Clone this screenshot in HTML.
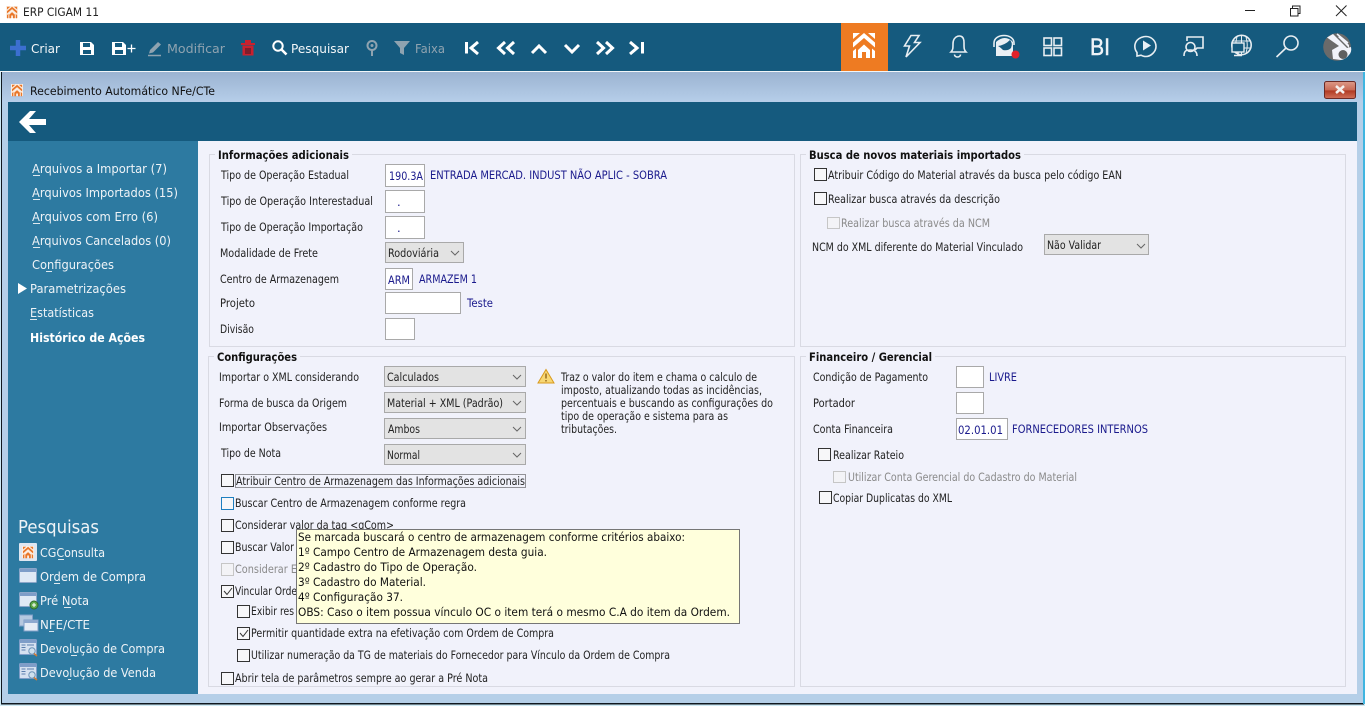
<!DOCTYPE html>
<html lang="pt"><head><meta charset="utf-8"><title>ERP CIGAM 11</title>
<style>
html,body{margin:0;padding:0;width:1365px;height:706px;overflow:hidden;background:#fff}
svg{display:block}
text{font-family:"DejaVu Sans","Liberation Sans",sans-serif;font-size:11.5px;fill:#222;white-space:pre}
.b{font-weight:bold;fill:#111}
.n{fill:#1a1a8c}
.g{fill:#8a8a8a}
.w{fill:#fff}
.s{fill:#eef3f7}
.t{font-size:12.5px;fill:#f4f7f9}
.d{font-size:12.5px;fill:#8fa3b0}
.bx{fill:#fff;stroke:#a9a9a9}
.sel{fill:#e3e3e3;stroke:#a9a9a9}
.cb{fill:#f7f7f9;stroke:#333}
.cd{fill:#f3f3f6;stroke:#c6c6c6}
.gb{fill:none;stroke:#d9dae3}
.ar{fill:none;stroke:#666;stroke-width:1}
.ic{fill:none;stroke:#e8eef2;stroke-width:1.6}
.nv{fill:none;stroke:#fff;stroke-width:3}
</style></head><body>
<svg width="1365" height="706" viewBox="0 0 1365 706" xmlns="http://www.w3.org/2000/svg">
<defs>
<linearGradient id="fr" x1="0" y1="0" x2="0" y2="1"><stop offset="0" stop-color="#9bb3d1"/><stop offset="1" stop-color="#b6cee9"/></linearGradient>
<linearGradient id="cl" x1="0" y1="0" x2="0" y2="1"><stop offset="0" stop-color="#dc9a88"/><stop offset=".5" stop-color="#c96a55"/><stop offset=".55" stop-color="#b03a22"/><stop offset="1" stop-color="#d0705a"/></linearGradient>
<path id="hs" d="M0 0h7l-7 6zM22 0h-7l7 6zM0 9.500l11-9.500 11 9.500v5l-11-9.500-11 9.500zM5 25v-8l6-5.500 6 5.500v8h-4v-6h-4v6zM0 18l3-2.500v9.500h-3zM22 18l-3-2.500v9.500h3z"/>
<g id="logo"><rect width="12" height="12" fill="#fbeee2"/><use href="#hs" transform="translate(1 .8) scale(.46)" fill="#e9772a"/></g>
<g id="win"><rect x=".5" y=".5" width="17" height="14" rx="1" fill="#dfe9f5" stroke="#8ba6c9"/><rect x="1" y="1" width="16" height="3" fill="#7e9dc8"/></g>
<g id="look"><rect x=".5" y=".5" width="17" height="15" rx="1" fill="#d5e1f0" stroke="#7f9ec8"/><rect x="1" y="1" width="16" height="3" fill="#7e9dc8"/><path d="M2.500 6h4M2.500 8.500h4M2.500 11h4M8 6h7" stroke="#5c7fae" fill="none"/><circle cx="13" cy="12" r="3.200" fill="#cfe0ee" stroke="#6d93b8"/><path d="M15 14.500l3 2.500" stroke="#d27b35" stroke-width="1.500"/></g>
</defs>

<!-- title bar -->
<rect width="1365" height="23" fill="#fff"/>
<use href="#logo" x="6" y="6"/>
<text x="23" y="16" textLength="76" lengthAdjust="spacingAndGlyphs">ERP CIGAM 11</text>
<path d="M1245 10.500h10" stroke="#222" stroke-width="1"/>
<path d="M1290.500 8.500h7.500v7.500h-7.500z" fill="#fff" stroke="#222"/><path d="M1292.500 8.500v-2.500h7.500v7.500h-2" fill="none" stroke="#222"/>
<path d="M1336 5.500l10.500 10.500M1346.500 5.500l-10.500 10.500" stroke="#222"/>

<!-- toolbar -->
<rect y="23" width="1365" height="48" fill="#155a7e"/>
<path d="M10 48h16M18 40v16" stroke="#3c6fd0" stroke-width="4.500"/>
<text class="t" x="31" y="53" textLength="29" lengthAdjust="spacingAndGlyphs">Criar</text>
<path d="M80 42h11l3 3v10h-14z" fill="#fff"/><rect x="83" y="43" width="7" height="4" fill="#155a7e"/><rect x="83" y="50" width="8" height="4" fill="#155a7e"/>
<path d="M112 42h11l3 3v10h-14z" fill="#fff"/><rect x="115" y="43" width="7" height="4" fill="#155a7e"/><rect x="115" y="50" width="8" height="4" fill="#155a7e"/>
<path d="M127.500 48.500h8M131.500 44.500v8" stroke="#fff" stroke-width="1.300"/>
<path d="M150 50l8-8 3 2.500-8 8-4 1z" fill="#8fa3b0"/><path d="M148 55.500h13" stroke="#8fa3b0" stroke-width="1.500"/>
<text class="d" x="167" y="53" textLength="58" lengthAdjust="spacingAndGlyphs">Modificar</text>
<path d="M241 43h14v2h-14zM245 43v-3h6v3" fill="#c9202e"/><path d="M242.500 45.500h11v10h-11z" fill="#c9202e"/><rect x="245" y="48" width="6" height="6" fill="#7e1d2c"/>
<circle cx="278" cy="46" r="4.700" fill="none" stroke="#fff" stroke-width="2"/><path d="M281.500 49.500l5 5" stroke="#fff" stroke-width="2.600"/>
<text class="t" x="291" y="53" textLength="58" lengthAdjust="spacingAndGlyphs">Pesquisar</text>
<circle cx="372" cy="45.500" r="4.500" fill="none" stroke="#8fa3b0" stroke-width="2"/><circle cx="372" cy="45.500" r="1.500" fill="#8fa3b0"/><path d="M372 50v6" stroke="#8fa3b0" stroke-width="2"/>
<path d="M394 41h16l-6 7v7l-4-2v-5z" fill="#8fa3b0"/>
<text class="d" x="415" y="53" textLength="30" lengthAdjust="spacingAndGlyphs">Faixa</text>
<path d="M465 42h3v11.500h-3z" fill="#fff"/><path d="M478 42l-7 6 7 6" class="nv"/>
<path d="M505 42l-6.500 6 6.500 6M514 42l-6.500 6 6.500 6" class="nv"/>
<path d="M532 53l7-7 7 7" class="nv"/>
<path d="M565 45l7 7 7-7" class="nv"/>
<path d="M597 42l6.500 6-6.500 6M606 42l6.500 6-6.500 6" class="nv"/>
<path d="M630 42l7 6-7 6" class="nv"/><path d="M641 42h3v11.500h-3z" fill="#fff"/>

<!-- right toolbar -->
<rect x="841" y="23" width="47" height="48" fill="#ee7b22"/>
<use href="#hs" x="853" y="33" fill="#fff"/>
<path d="M912 36.500h8l-4.500 7h5.500l-14 14.500 3.500-11h-5z" class="ic" transform="translate(-1 -1)"/>
<path d="M952 53c2-2 2-4 2-8 0-9 9-10 10.500-5 .7 2 .5 3 .5 5 0 4 0 6 2 8z" class="ic" transform="translate(-1 -1)"/><path d="M955.500 55.500a3 2.500 0 0 0 6 0" class="ic" transform="translate(-1 -1)"/>
<path d="M994 47v-4c0-10 20-10 20 0v2" class="ic"/><path d="M996 42q9-8 17 0v14h-17z" fill="#eaf0f5"/><path d="M998 46q7-1 12-6 3 3 1 8-3 3-8 2-3-3-5-4z" fill="#155a7e"/><circle cx="1015.500" cy="54.500" r="4" fill="#e3212a"/>
<g class="ic" stroke="#cfdbe3"><rect x="1044" y="38" width="7.500" height="7.500"/><rect x="1054" y="38" width="7.500" height="7.500"/><rect x="1044" y="48" width="7.500" height="7.500"/><rect x="1054" y="48" width="7.500" height="7.500"/></g>
<text x="1090" y="55" textLength="20" lengthAdjust="spacingAndGlyphs" style="font-size:24px;fill:#eef3f7;font-family:'Liberation Sans',sans-serif;stroke:#eef3f7;stroke-width:.5">BI</text>
<g transform="translate(0 -3)"><path d="M1137 55.500c-2-2.500-2.500-5-2-8 1-5 6-8 11-8 6 0 10 5 10 10s-5 10-10 10c-2 0-3.500-.5-5-1.300l-4 .8z" class="ic"/><path d="M1143 43.500l8 5-8 5z" fill="#eaf0f5"/></g>
<circle cx="1190.500" cy="47" r="4.500" class="ic"/><path d="M1184 56c0-6 3-6 6.500-6s6.500 1 6.500 6" class="ic"/><path d="M1187 41v-4h16v11h-6l-2 2" class="ic"/>
<circle cx="1241.500" cy="45" r="9.700" class="ic"/><path d="M1232 41h19M1232 48h19M1241.500 35.500v19M1237 37q-2.500 8 0 16M1246 37q2.500 8 0 16" stroke="#e8eef2" fill="none" stroke-width="1"/><rect x="1232" y="43" width="12" height="9" fill="#155a7e" stroke="#e8eef2" stroke-width="1.400"/><path d="M1238 52v3M1234 55.500h8" class="ic"/>
<circle cx="1291" cy="43" r="7" class="ic"/><path d="M1286 48l-9.500 9" class="ic"/>
<circle cx="1337" cy="47" r="13.800" fill="#6a6a6a"/>
<path d="M1327 37.500l6-3.500 14 14 4-1q1 5-2 8-3 4-8 5l-8-1-1-9 7-4z" fill="#f1f3fa"/>
<path d="M1340 36l9 9v3l-11-11z" fill="#f1f3fa"/><circle cx="1343" cy="54.500" r="4.500" fill="#5f5f5f"/>
<path d="M1337 34l11 9" stroke="#f1f3fa" stroke-width="1.500"/>

<!-- window frame -->
<rect y="71" width="1365" height="635" fill="#cfeaf5"/>
<rect x="1" y="71.500" width="1363" height="633" fill="#101820"/>
<rect x="2" y="72" width="1361" height="631" fill="#b5cfe8"/>
<rect x="2" y="72" width="1361" height="30" fill="url(#fr)"/>
<path d="M0 71.500h1365" stroke="#f2f6f9"/>
<use href="#logo" x="11" y="84"/>
<text x="30" y="95" textLength="185" lengthAdjust="spacingAndGlyphs" style="fill:#111">Recebimento Automático NFe/CTe</text>
<rect x="1324.500" y="81.500" width="31" height="17" rx="2" fill="url(#cl)" stroke="#6b2a25"/>
<path d="M1336 86l8 7M1344 86l-8 7" stroke="#f5f0ee" stroke-width="2.500"/>
<rect x="1363" y="72" width="2" height="632" fill="#3fb5e0"/>

<!-- header band + content -->
<rect x="8" y="102" width="1349" height="39" fill="#155a7e"/>
<path d="M19 122l11-11h6l-7 8h17v6h-17l7 8h-6z" fill="#fff"/>
<rect x="8" y="141" width="1349" height="553" fill="#f1f2fb"/>
<rect x="8" y="141" width="190" height="553" fill="#2d7aa1"/>

<!-- sidebar -->
<text class="s" style="font-size:12.5px" x="32" y="173" textLength="135" lengthAdjust="spacingAndGlyphs">Arquivos a Importar (7)</text>
<text class="s" style="font-size:12.5px" x="32" y="197" textLength="146" lengthAdjust="spacingAndGlyphs">Arquivos Importados (15)</text>
<text class="s" style="font-size:12.5px" x="32" y="221" textLength="126" lengthAdjust="spacingAndGlyphs">Arquivos com Erro (6)</text>
<text class="s" style="font-size:12.5px" x="32" y="245" textLength="139" lengthAdjust="spacingAndGlyphs">Arquivos Cancelados (0)</text>
<text class="s" style="font-size:12.5px" x="32" y="269" textLength="82" lengthAdjust="spacingAndGlyphs">Configurações</text>
<path d="M18 283l9 5.500-9 5.500z" fill="#fff"/>
<text class="s" style="font-size:12.5px" x="30" y="293" textLength="96" lengthAdjust="spacingAndGlyphs">Parametrizações</text>
<text class="s" style="font-size:12.5px" x="30" y="317" textLength="64" lengthAdjust="spacingAndGlyphs">Estatísticas</text>
<text class="w" style="font-size:12.5px;font-weight:bold" x="30" y="342" textLength="115" lengthAdjust="spacingAndGlyphs">Histórico de Ações</text>
<path d="M33 175.500h7M33 199.500h7M33 223.500h7M33 247.500h7M46 271.500h6M30 319.500h7" stroke="#dfe9ef"/>
<text class="s" x="18" y="533" textLength="81" lengthAdjust="spacingAndGlyphs" style="font-size:18px">Pesquisas</text>
<rect x="19" y="543" width="18" height="18" rx="1" fill="#dfe7f1"/><rect x="22" y="546" width="12" height="12" fill="#fff"/><use href="#logo" x="22" y="546"/>
<use href="#win" x="19" y="568"/>
<use href="#win" x="19" y="592"/><circle cx="34" cy="605" r="4" fill="#5ea94a" stroke="#2c6b2a"/><path d="M32 605h4M34 603v4" stroke="#fff"/>
<rect x="19.500" y="615" width="13" height="11" fill="#b6c9e0" stroke="#7f9ec8"/><rect x="24" y="620" width="14" height="11" fill="#e6edf6" stroke="#7f9ec8"/><rect x="24" y="620" width="14" height="3" fill="#8ea9cf"/>
<use href="#look" x="19" y="639"/>
<use href="#look" x="19" y="663"/>
<text class="s" style="font-size:12.5px" x="40" y="557" textLength="65" lengthAdjust="spacingAndGlyphs">CGConsulta</text>
<text class="s" style="font-size:12.5px" x="40" y="581" textLength="106" lengthAdjust="spacingAndGlyphs">Ordem de Compra</text>
<text class="s" style="font-size:12.5px" x="40" y="605" textLength="49" lengthAdjust="spacingAndGlyphs">Pré Nota</text>
<text class="s" style="font-size:12.5px" x="40" y="629" textLength="50" lengthAdjust="spacingAndGlyphs">NFE/CTE</text>
<text class="s" style="font-size:12.5px" x="40" y="653" textLength="125" lengthAdjust="spacingAndGlyphs">Devolução de Compra</text>
<text class="s" style="font-size:12.5px" x="40" y="677" textLength="116" lengthAdjust="spacingAndGlyphs">Devolução de Venda</text>
<path d="M58 559.500h6M54 583.500h6M64 607.500h7M49 631.500h5M71 655.500h6M68 679.500h3" stroke="#dfe9ef"/>

<!-- group boxes -->
<rect class="gb" x="209.500" y="154.500" width="585" height="192"/>
<rect class="gb" x="800.500" y="154.500" width="545" height="192"/>
<rect class="gb" x="208.500" y="356.500" width="586" height="330"/>
<rect class="gb" x="800.500" y="356.500" width="545" height="330"/>
<rect x="215" y="150" width="137" height="10" fill="#f1f2fb"/>
<rect x="806" y="150" width="218" height="10" fill="#f1f2fb"/>
<rect x="214" y="352" width="86" height="10" fill="#f1f2fb"/>
<rect x="806" y="352" width="129" height="10" fill="#f1f2fb"/>
<text class="b" x="218" y="159" textLength="131" lengthAdjust="spacingAndGlyphs">Informações adicionais</text>
<text class="b" x="809" y="159" textLength="212" lengthAdjust="spacingAndGlyphs">Busca de novos materiais importados</text>
<text class="b" x="217" y="361" textLength="80" lengthAdjust="spacingAndGlyphs">Configurações</text>
<text class="b" x="809" y="361" textLength="123" lengthAdjust="spacingAndGlyphs">Financeiro / Gerencial</text>

<!-- informacoes adicionais -->
<text x="221" y="179" textLength="128" lengthAdjust="spacingAndGlyphs">Tipo de Operação Estadual</text>
<text x="221" y="205" textLength="152" lengthAdjust="spacingAndGlyphs">Tipo de Operação Interestadual</text>
<text x="221" y="231" textLength="142" lengthAdjust="spacingAndGlyphs">Tipo de Operação Importação</text>
<text x="220" y="257" textLength="98" lengthAdjust="spacingAndGlyphs">Modalidade de Frete</text>
<text x="220" y="283" textLength="119" lengthAdjust="spacingAndGlyphs">Centro de Armazenagem</text>
<text x="220" y="307" textLength="35" lengthAdjust="spacingAndGlyphs">Projeto</text>
<text x="220" y="333" textLength="34" lengthAdjust="spacingAndGlyphs">Divisão</text>
<rect class="bx" x="385.500" y="164.500" width="39" height="22"/>
<rect class="bx" x="385.500" y="190.500" width="39" height="22"/>
<rect class="bx" x="385.500" y="216.500" width="39" height="22"/>
<rect class="sel" x="385.500" y="242.500" width="78" height="20"/>
<rect class="bx" x="385.500" y="268.500" width="27" height="21"/>
<rect class="bx" x="385.500" y="292.500" width="75" height="21"/>
<rect class="bx" x="385.500" y="318.500" width="29" height="21"/>
<text class="n" x="389" y="180" textLength="34" lengthAdjust="spacingAndGlyphs">190.3A</text>
<text class="n" x="397" y="206">.</text><text class="n" x="397" y="232">.</text>
<text class="n" x="430" y="179" textLength="237" lengthAdjust="spacingAndGlyphs">ENTRADA MERCAD. INDUST NÃO APLIC - SOBRA</text>
<text x="388" y="257" textLength="51" lengthAdjust="spacingAndGlyphs">Rodoviária</text>
<path class="ar" d="M451 251l4 4 4-4"/>
<text class="n" x="388" y="284" textLength="22" lengthAdjust="spacingAndGlyphs">ARM</text>
<text class="n" x="419" y="283" textLength="58" lengthAdjust="spacingAndGlyphs">ARMAZEM 1</text>
<text class="n" x="467" y="307" textLength="26" lengthAdjust="spacingAndGlyphs">Teste</text>

<!-- configuracoes -->
<text x="219" y="381" textLength="140" lengthAdjust="spacingAndGlyphs">Importar o XML considerando</text>
<text x="219" y="407" textLength="128" lengthAdjust="spacingAndGlyphs">Forma de busca da Origem</text>
<text x="219" y="431" textLength="108" lengthAdjust="spacingAndGlyphs">Importar Observações</text>
<text x="221" y="457" textLength="60" lengthAdjust="spacingAndGlyphs">Tipo de Nota</text>
<rect class="sel" x="384.500" y="366.500" width="141" height="20"/>
<rect class="sel" x="384.500" y="392.500" width="141" height="20"/>
<rect class="sel" x="384.500" y="418.500" width="141" height="20"/>
<rect class="sel" x="384.500" y="444.500" width="141" height="20"/>
<text x="387" y="381" textLength="52" lengthAdjust="spacingAndGlyphs">Calculados</text>
<text x="387" y="407" textLength="116" lengthAdjust="spacingAndGlyphs">Material + XML (Padrão)</text>
<text x="388" y="433" textLength="32" lengthAdjust="spacingAndGlyphs">Ambos</text>
<text x="387" y="459" textLength="33" lengthAdjust="spacingAndGlyphs">Normal</text>
<path class="ar" d="M513 375l4 4 4-4M513 401l4 4 4-4M513 427l4 4 4-4M513 453l4 4 4-4"/>
<path d="M546 369.500l8 13.500h-16z" fill="#f7d774" stroke="#d99a1c"/><path d="M546 373.500v5M546 380v1.500" stroke="#8a5a10" stroke-width="1.300"/>
<text x="561" y="381" textLength="196" lengthAdjust="spacingAndGlyphs">Traz o valor do item e chama o calculo de</text>
<text x="561" y="394" textLength="201" lengthAdjust="spacingAndGlyphs">imposto, atualizando todas as incidências,</text>
<text x="561" y="407" textLength="212" lengthAdjust="spacingAndGlyphs">percentuais e buscando as configurações do</text>
<text x="561" y="420" textLength="167" lengthAdjust="spacingAndGlyphs">tipo de operação e sistema para as</text>
<text x="561" y="433" textLength="56" lengthAdjust="spacingAndGlyphs">tributações.</text>

<rect class="cb" x="221.500" y="474.500" width="12" height="12"/>
<rect x="235.500" y="474.500" width="290" height="13" fill="none" stroke="#333" stroke-dasharray="1 1"/>
<text x="236" y="485" textLength="289" lengthAdjust="spacingAndGlyphs">Atribuir Centro de Armazenagem das Informações adicionais</text>
<rect x="221.500" y="497.500" width="12" height="12" fill="#f7f7f9" stroke="#1e7fc0"/>
<text x="235" y="507" textLength="231" lengthAdjust="spacingAndGlyphs">Buscar Centro de Armazenagem conforme regra</text>
<rect class="cb" x="221.500" y="519.500" width="12" height="12"/>
<text x="235" y="529" textLength="159" lengthAdjust="spacingAndGlyphs">Considerar valor da tag &lt;gCom&gt;</text>
<rect class="cb" x="221.500" y="541.500" width="12" height="12"/>
<text x="235" y="551" textLength="59" lengthAdjust="spacingAndGlyphs">Buscar Valor</text>
<rect class="cd" x="221.500" y="563.500" width="12" height="12"/>
<text class="g" x="235" y="573" textLength="62" lengthAdjust="spacingAndGlyphs">Considerar E</text>
<rect class="cb" x="221.500" y="585.500" width="12" height="12"/>
<path d="M224 591l3 3.500 5-6.500" fill="none" stroke="#333"/>
<text x="235" y="595" textLength="62" lengthAdjust="spacingAndGlyphs">Vincular Orde</text>
<rect class="cb" x="237.500" y="605.500" width="12" height="12"/>
<text x="251" y="615" textLength="43" lengthAdjust="spacingAndGlyphs">Exibir res</text>
<rect class="cb" x="237.500" y="627.500" width="12" height="12"/>
<path d="M240 633l3 3.500 5-6.500" fill="none" stroke="#333"/>
<text x="251" y="637" textLength="303" lengthAdjust="spacingAndGlyphs">Permitir quantidade extra na efetivação com Ordem de Compra</text>
<rect class="cb" x="237.500" y="649.500" width="12" height="12"/>
<text x="251" y="659" textLength="419" lengthAdjust="spacingAndGlyphs">Utilizar numeração da TG de materiais do Fornecedor para Vínculo da Ordem de Compra</text>
<rect class="cb" x="221.500" y="672.500" width="12" height="12"/>
<text x="235" y="682" textLength="253" lengthAdjust="spacingAndGlyphs">Abrir tela de parâmetros sempre ao gerar a Pré Nota</text>

<!-- busca -->
<rect class="cb" x="814.500" y="168.500" width="12" height="12"/>
<text x="828" y="179" textLength="294" lengthAdjust="spacingAndGlyphs">Atribuir Código do Material através da busca pelo código EAN</text>
<rect class="cb" x="814.500" y="192.500" width="12" height="12"/>
<text x="828" y="203" textLength="172" lengthAdjust="spacingAndGlyphs">Realizar busca através da descrição</text>
<rect class="cd" x="827.500" y="217.500" width="12" height="11"/>
<text class="g" x="841" y="227" textLength="149" lengthAdjust="spacingAndGlyphs">Realizar busca através da NCM</text>
<text x="812" y="251" textLength="211" lengthAdjust="spacingAndGlyphs">NCM do XML diferente do Material Vinculado</text>
<rect class="sel" x="1044.500" y="234.500" width="104" height="20"/>
<text x="1047" y="249" textLength="54" lengthAdjust="spacingAndGlyphs">Não Validar</text>
<path class="ar" d="M1137 244l4 4 4-4"/>

<!-- financeiro -->
<text x="813" y="381" textLength="115" lengthAdjust="spacingAndGlyphs">Condição de Pagamento</text>
<text x="813" y="407" textLength="42" lengthAdjust="spacingAndGlyphs">Portador</text>
<text x="813" y="433" textLength="80" lengthAdjust="spacingAndGlyphs">Conta Financeira</text>
<rect class="bx" x="956.500" y="366.500" width="27" height="21"/>
<rect class="bx" x="956.500" y="392.500" width="27" height="21"/>
<rect class="bx" x="956.500" y="418.500" width="51" height="21"/>
<text class="n" x="989" y="381" textLength="28" lengthAdjust="spacingAndGlyphs">LIVRE</text>
<text class="n" x="958" y="434" textLength="45" lengthAdjust="spacingAndGlyphs">02.01.01</text>
<text class="n" x="1012" y="433" textLength="136" lengthAdjust="spacingAndGlyphs">FORNECEDORES INTERNOS</text>
<rect class="cb" x="818.500" y="448.500" width="12" height="12"/>
<text x="833" y="459" textLength="71" lengthAdjust="spacingAndGlyphs">Realizar Rateio</text>
<rect class="cd" x="833.500" y="471.500" width="12" height="11"/>
<text class="g" x="848" y="481" textLength="229" lengthAdjust="spacingAndGlyphs">Utilizar Conta Gerencial do Cadastro do Material</text>
<rect class="cb" x="819.500" y="491.500" width="12" height="12"/>
<text x="833" y="502" textLength="119" lengthAdjust="spacingAndGlyphs">Copiar Duplicatas do XML</text>

<!-- tooltip -->
<rect x="296.500" y="529.500" width="443" height="94" fill="#ffffdc" stroke="#767676"/>
<text x="298" y="541" textLength="387" lengthAdjust="spacingAndGlyphs" style="fill:#111">Se marcada buscará o centro de armazenagem conforme critérios abaixo:</text>
<text x="298" y="556" textLength="249" lengthAdjust="spacingAndGlyphs" style="fill:#111">1º Campo Centro de Armazenagem desta guia.</text>
<text x="298" y="571" textLength="179" lengthAdjust="spacingAndGlyphs" style="fill:#111">2º Cadastro do Tipo de Operação.</text>
<text x="298" y="586" textLength="128" lengthAdjust="spacingAndGlyphs" style="fill:#111">3º Cadastro do Material.</text>
<text x="298" y="601" textLength="105" lengthAdjust="spacingAndGlyphs" style="fill:#111">4º Configuração 37.</text>
<text x="298" y="616" textLength="432" lengthAdjust="spacingAndGlyphs" style="fill:#111">OBS: Caso o item possua vínculo OC o item terá o mesmo C.A do item da Ordem.</text>
</svg>
</body></html>
